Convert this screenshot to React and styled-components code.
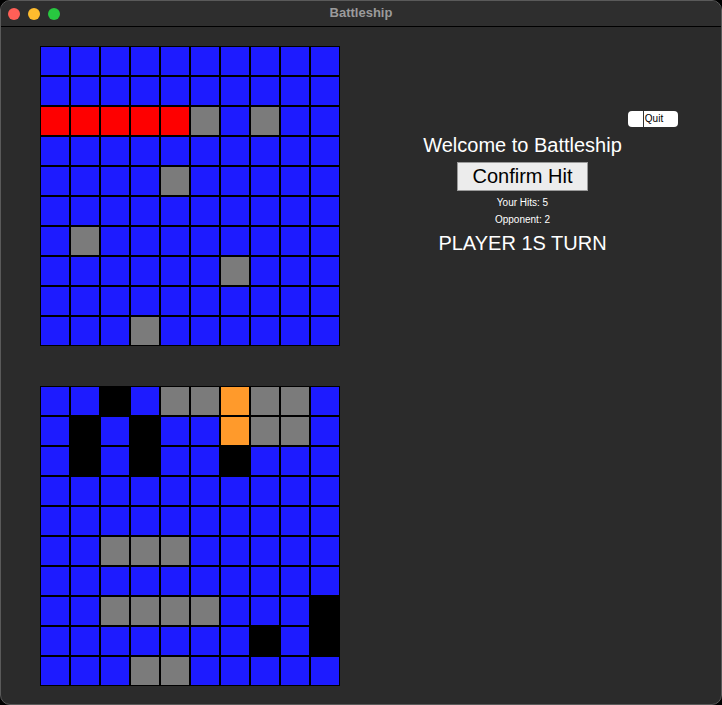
import React from 'react';
import styled, { createGlobalStyle } from 'styled-components';

const colors = {
  B: '#1d1bff',
  R: '#fe0000',
  G: '#7b7b7b',
  K: '#000000',
  O: '#ff9a2b',
};

// top board: where you fired
const targetBoard = [
  'BBBBBBBBBB',
  'BBBBBBBBBB',
  'RRRRRGBGBB',
  'BBBBBBBBBB',
  'BBBBGBBBBB',
  'BBBBBBBBBB',
  'BGBBBBBBBB',
  'BBBBBBGBBB',
  'BBBBBBBBBB',
  'BBBGBBBBBB',
];

// bottom board: your own ships
const homeBoard = [
  'BBKBGGOGGB',
  'BKBKBBOGGB',
  'BKBKBBKBBB',
  'BBBBBBBBBB',
  'BBBBBBBBBB',
  'BBGGGBBBBB',
  'BBBBBBBBBB',
  'BBGGGGBBBK',
  'BBBBBBBKBK',
  'BBBGGBBBBB',
];

const GlobalStyle = createGlobalStyle`
  html, body {
    margin: 0;
    padding: 0;
    background: #000;
  }
  body {
    font-family: "Liberation Sans", Arial, sans-serif;
  }
`;

const Window = styled.div`
  width: 722px;
  height: 705px;
  box-sizing: border-box;
  border: 1px solid #5a5a5a;
  border-radius: 10px;
  overflow: hidden;
  background: #2b2b2b;
  display: flex;
  flex-direction: column;
`;

const TitleBar = styled.div`
  height: 25px;
  flex-shrink: 0;
  background: #2e2e2e;
  border-bottom: 1px solid #000;
  display: flex;
  align-items: center;
  position: relative;
  padding-left: 7px;
  gap: 8px;
`;

const Light = styled.span`
  width: 12px;
  height: 12px;
  border-radius: 50%;
  background: ${p => p.$color};
`;

const Title = styled.div`
  position: absolute;
  left: 0;
  right: 0;
  top: 4px;
  text-align: center;
  font-size: 13px;
  font-weight: bold;
  color: #9b9b9b;
  pointer-events: none;
`;

const Body = styled.div`
  flex: 1;
  display: flex;
`;

const Boards = styled.div`
  display: flex;
  flex-direction: column;
  gap: 40px;
  padding: 19px 0 0 39px;
`;

const Grid = styled.div`
  display: grid;
  grid-template-columns: repeat(10, 30px);
  grid-auto-rows: 30px;
`;

const Cell = styled.div`
  box-sizing: border-box;
  border: 1px solid #000;
  background: ${p => colors[p.$c]};
`;

const Panel = styled.div`
  flex: 1;
  display: flex;
  flex-direction: column;
  align-items: center;
  padding-top: 84px;
  padding-right: 16px;
  color: #fff;
`;

const QuitRow = styled.div`
  align-self: stretch;
  display: flex;
  justify-content: flex-end;
  padding-right: 27px;
`;

const QuitButton = styled.button`
  width: 50px;
  height: 16px;
  border: none;
  border-radius: 4px;
  background: #fff;
  color: #000;
  font-family: inherit;
  font-size: 10px;
  padding: 0;
  display: flex;
  align-items: center;
  justify-content: center;

  span {
    border-left: 1px solid #333;
    line-height: 16px;
    padding-left: 1px;
  }
`;

const Heading = styled.div`
  font-size: 20px;
  line-height: 23px;
  margin-top: 7px;
`;

const ConfirmButton = styled.button`
  margin-top: 5px;
  width: 131px;
  height: 29px;
  box-sizing: border-box;
  border: 1px solid #9a9a9a;
  background: #ececec;
  color: #000;
  font-family: inherit;
  font-size: 20px;
  padding: 0;
`;

const Score = styled.div`
  font-size: 10px;
  line-height: 12px;
  margin-top: ${p => p.$top}px;
`;

const Turn = styled.div`
  font-size: 20px;
  line-height: 23px;
  margin-top: 6px;
`;

const Board = ({ rows }) => (
  <Grid>
    {rows.flatMap((row, r) =>
      row.split('').map((c, i) => <Cell key={r + '-' + i} $c={c} />)
    )}
  </Grid>
);

export default function App() {
  return (
    <>
      <GlobalStyle />
      <Window>
        <TitleBar>
          <Light $color="#ff5f57" />
          <Light $color="#febc2e" />
          <Light $color="#28c840" />
          <Title>Battleship</Title>
        </TitleBar>
        <Body>
          <Boards>
            <Board rows={targetBoard} />
            <Board rows={homeBoard} />
          </Boards>
          <Panel>
            <QuitRow>
              <QuitButton><span>Quit</span></QuitButton>
            </QuitRow>
            <Heading>Welcome to Battleship</Heading>
            <ConfirmButton>Confirm Hit</ConfirmButton>
            <Score $top={6}>Your Hits: 5</Score>
            <Score $top={5}>Opponent: 2</Score>
            <Turn>PLAYER 1S TURN</Turn>
          </Panel>
        </Body>
      </Window>
    </>
  );
}
